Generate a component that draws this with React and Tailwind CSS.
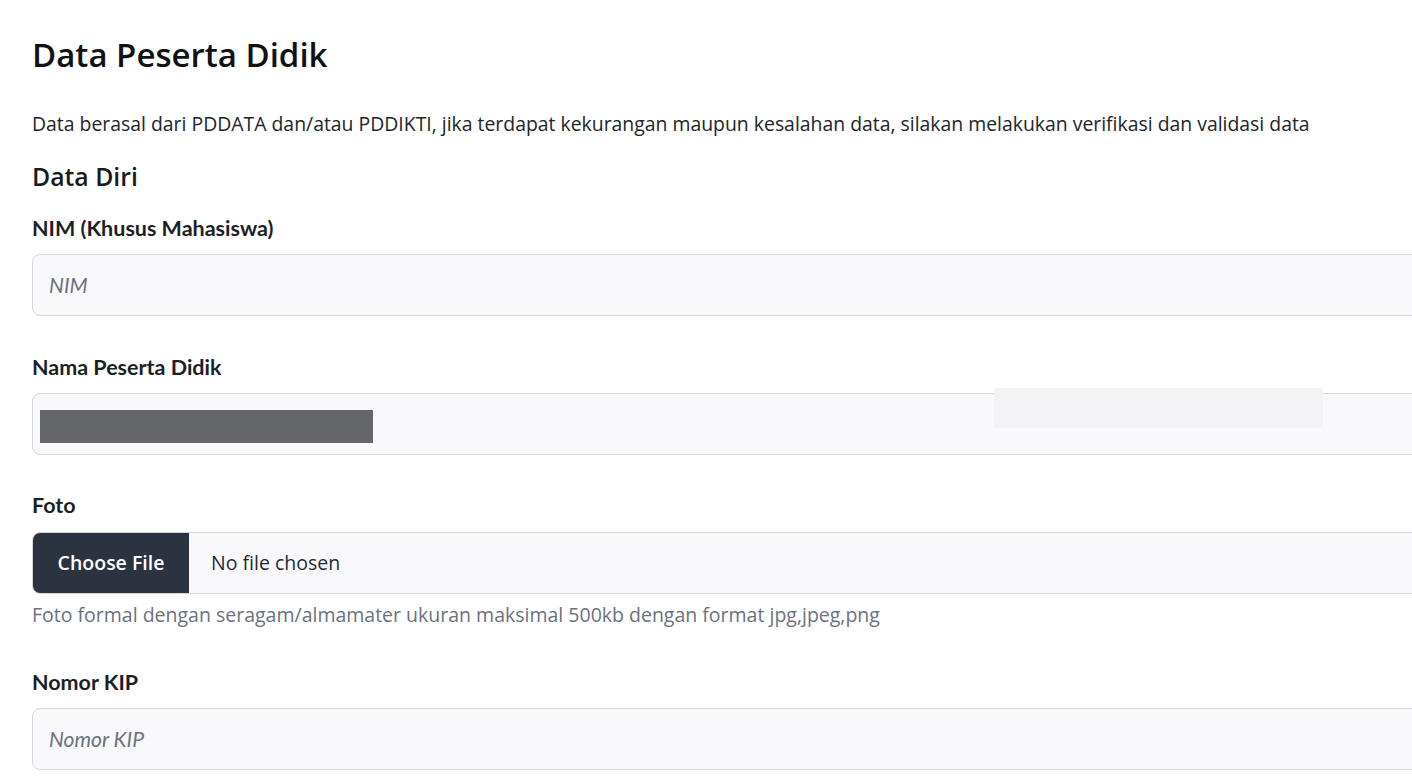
import React from 'react';

const sans = { fontFamily: '"Open Sans", "Noto Sans", sans-serif' };
const lato = { fontFamily: 'Lato, "Open Sans", sans-serif' };

function Label({ children, className = '' }) {
    return (
        <div className={`h-6 text-[21.5px] leading-6 font-bold text-[#1c1f26] ${className}`} style={lato}>
            {children}
        </div>
    );
}

function TextField({ placeholder, children }) {
    return (
        <div className="relative mt-[14px] flex h-[62px] w-[1420px] items-center rounded-lg border border-[#d4d6dc] bg-[#f9f9fb] px-4">
            {placeholder ? (
                <span className="text-[21px] italic text-[#6b7280]" style={lato}>{placeholder}</span>
            ) : null}
            {children}
        </div>
    );
}

export default function App() {
    return (
        <div className="min-h-screen w-full overflow-hidden bg-white" style={sans}>
            <div className="pl-[32px] pt-[37px]">
                <h1 className="h-9 text-[33px] leading-9 font-semibold text-[#111111]">Data Peserta Didik</h1>

                <p className="mt-[39px] h-6 text-[19.4px] leading-6 text-[#212529]">
                    Data berasal dari PDDATA dan/atau PDDIKTI, jika terdapat kekurangan maupun kesalahan data, silakan melakukan verifikasi dan validasi data
                </p>

                <h2 className="mt-[26px] h-7 text-[24.8px] leading-7 font-semibold text-[#1a1a1a]">Data Diri</h2>

                <Label className="mt-[26px]">NIM (Khusus Mahasiswa)</Label>
                <TextField placeholder="NIM" />

                <Label className="mt-[39px]">Nama Peserta Didik</Label>
                <TextField>
                    <div className="absolute left-[7px] top-[16px] h-[33px] w-[333px] bg-[#656667]" />
                    <div className="absolute left-[961px] top-[-6px] h-[40px] w-[329px] bg-[#f3f3f5]" />
                </TextField>

                <Label className="mt-[38px]">Foto</Label>
                <div className="mt-[15px] flex h-[62px] w-[1420px] items-stretch overflow-hidden rounded-lg border border-[#d4d6dc] bg-[#f9f9fb]">
                    <div className="flex w-[156px] items-center justify-center bg-[#2b3240] text-[19.5px] font-semibold text-white">
                        Choose File
                    </div>
                    <div className="flex items-center pl-[22px] text-[19.5px] text-[#1f2937]">No file chosen</div>
                </div>
                <p className="mt-[9px] h-6 text-[19.5px] leading-6 text-[#6b7280]">
                    Foto formal dengan seragam/almamater ukuran maksimal 500kb dengan format jpg,jpeg,png
                </p>

                <Label className="mt-[43px]">Nomor KIP</Label>
                <TextField placeholder="Nomor KIP" />
            </div>
        </div>
    );
}
